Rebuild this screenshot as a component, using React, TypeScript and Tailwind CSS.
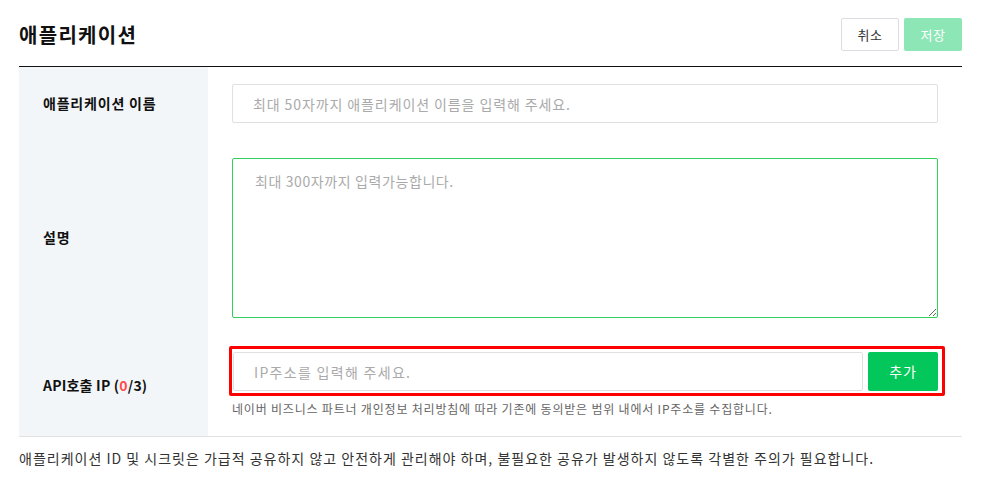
export default function App() {
  return (
    <div className="w-[986px] h-[490px] bg-white text-[#222] font-['Noto_Sans_CJK_KR','Noto_Sans',sans-serif] px-[19px] pt-[18px] overflow-hidden">
      <div className="w-[943px]">
        <div className="flex items-center justify-between h-[33px]">
          <h1 className="text-[20px] font-bold leading-none tracking-[1.3px] text-[#111]">애플리케이션</h1>
          <div className="flex gap-[5px]">
            <button className="w-[58px] h-[33px] border border-[#dcdde2] rounded-[2px] bg-white text-[13px] text-[#333] tracking-[0.5px]">취소</button>
            <button className="w-[58px] h-[33px] rounded-[2px] bg-[#8de6b5] text-[13px] text-white tracking-[0.5px]">저장</button>
          </div>
        </div>

        <div className="mt-[15px] border-t border-[#111] border-b border-b-[#e2e2e2]">
          {/* row 1 */}
          <div className="flex h-[73px]">
            <div className="w-[189px] bg-[#f3f6f9] flex items-center pl-[24px] text-[14px] font-bold text-[#111] tracking-[0.8px]">애플리케이션 이름</div>
            <div className="flex-1 pl-[24px] pr-[24px] pt-[17px]">
              <input
                className="w-full h-[39px] border border-[#e0e0e0] rounded-[2px] px-[20px] text-[14px] tracking-[0.9px] placeholder:text-[#aaa] outline-none"
                placeholder="최대 50자까지 애플리케이션 이름을 입력해 주세요."
              />
            </div>
          </div>

          {/* row 2 */}
          <div className="flex h-[195px]">
            <div className="w-[189px] bg-[#f3f6f9] flex items-center pl-[24px] text-[14px] font-bold text-[#111] tracking-[0.8px]">설명</div>
            <div className="flex-1 pl-[24px] pr-[24px] pt-[18px]">
              <textarea
                className="block w-full h-[160px] border border-[#2fd15c] rounded-[2px] px-[22px] py-[12px] text-[14px] tracking-[0.6px] placeholder:text-[#aaa] outline-none"
                placeholder="최대 300자까지 입력가능합니다."
              />
            </div>
          </div>

          {/* row 3 */}
          <div className="flex h-[101px]">
            <div className="w-[189px] bg-[#f3f6f9] flex items-center pl-[24px] text-[14px] font-bold text-[#111] tracking-[0.2px]">
              API호출 IP (<span className="text-[#ff4d4d]">0</span>/3)
            </div>
            <div className="flex-1 pl-[24px] pr-[24px] pt-[17px]">
              <div className="relative flex gap-[5px] pl-[1px]">
                <input
                  className="flex-1 h-[39px] border border-[#e0e0e0] rounded-[2px] px-[20px] text-[14px] tracking-[1.3px] placeholder:text-[#aaa] outline-none"
                  placeholder="IP주소를 입력해 주세요."
                />
                <button className="w-[70px] h-[39px] rounded-[2px] bg-[#03c75a] text-white text-[14px] tracking-[0.8px]">추가</button>
                <div className="absolute -left-[3px] -top-[6px] -right-[7px] -bottom-[5px] border-[3px] border-[#ff0000] rounded-[2px] pointer-events-none" />
              </div>
              <p className="mt-[10px] text-[12px] text-[#666] leading-[16px] tracking-[0.8px]">
                네이버 비즈니스 파트너 개인정보 처리방침에 따라 기존에 동의받은 범위 내에서 IP주소를 수집합니다.
              </p>
            </div>
          </div>
        </div>

        <p className="mt-[11px] text-[14px] text-[#333] leading-[20px] tracking-[1px]">
          애플리케이션 ID 및 시크릿은 가급적 공유하지 않고 안전하게 관리해야 하며, 불필요한 공유가 발생하지 않도록 각별한 주의가 필요합니다.
        </p>
      </div>
    </div>
  )
}
